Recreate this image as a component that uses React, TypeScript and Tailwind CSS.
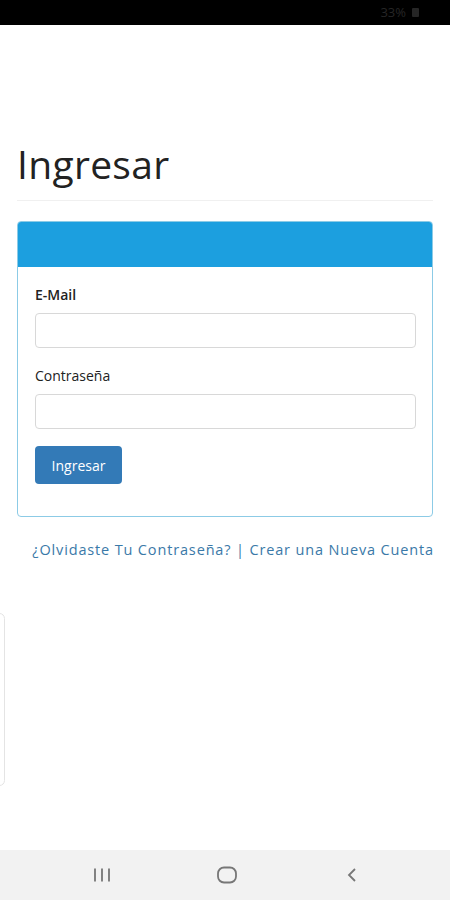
import React from "react";

const font = { fontFamily: '"Open Sans", "Noto Sans", Arial, sans-serif' };

function StatusBar() {
  return (
    <div className="h-[25px] bg-black flex items-center justify-end pr-[31px] gap-[6px]">
      <span className="text-[13px] text-[#262626] leading-none">33%</span>
      <span className="w-[7px] h-[9px] bg-[#262626] rounded-[1px]" />
    </div>
  );
}

function NavBar() {
  return (
    <div className="h-[50px] bg-[#f2f2f2] flex items-center pl-[82px] gap-[85px]">
      <div className="w-[40px] flex justify-center">
        <svg width="20" height="16" viewBox="0 0 20 16" className="text-[#777]">
          <path d="M3 1.5v13M10 1.5v13M17 1.5v13" stroke="currentColor" strokeWidth="1.8" />
        </svg>
      </div>
      <div className="w-[40px] flex justify-center">
        <svg width="22" height="18" viewBox="0 0 22 18" className="text-[#777]">
          <rect x="2" y="1.5" width="18" height="15" rx="6" fill="none" stroke="currentColor" strokeWidth="1.8" />
        </svg>
      </div>
      <div className="w-[40px] flex justify-center">
        <svg width="12" height="16" viewBox="0 0 12 16" className="text-[#777]">
          <path d="M9 2 3 8l6 6" fill="none" stroke="currentColor" strokeWidth="1.8" />
        </svg>
      </div>
    </div>
  );
}

export default function App() {
  return (
    <div className="w-[450px] h-[900px] bg-white flex flex-col" style={font}>
      <StatusBar />
      <div className="flex-1 flex flex-col relative">
        <div className="px-[17px] pt-[117px]">
          <h1 className="text-[39px] leading-[44px] text-[#222] font-normal tracking-[0.3px] pb-[14px] border-b border-[#f0f0f0]">
            Ingresar
          </h1>

          {/* Panel */}
          <div className="mt-[20px] border border-[#8ccbe6] rounded-[4px] overflow-hidden">
            <div className="h-[45px] bg-[#1c9fdf]" />
            <div className="pl-[17px] pr-[16px] pt-[18px] pb-[32px]">
              <label className="block text-[14px] font-semibold text-[#222] leading-[20px]">E-Mail</label>
              <div className="mt-[8px] h-[35px] border border-[#d8d8d8] rounded-[4px]" />
              <label className="block mt-[18px] text-[14px] font-medium text-[#222] leading-[20px]">Contraseña</label>
              <div className="mt-[8px] h-[35px] border border-[#d8d8d8] rounded-[4px]" />
              <button className="mt-[17px] h-[38px] w-[87px] bg-[#337ab7] rounded-[4px] text-white text-[14px] flex items-center justify-center">
                Ingresar
              </button>
            </div>
          </div>

          <p className="mt-[23px] text-[14.5px] leading-[20px] text-[#3a79a8] text-right tracking-[0.85px] whitespace-nowrap mr-[-1px]">
            ¿Olvidaste Tu Contraseña? | Crear una Nueva Cuenta
          </p>
        </div>

        <div className="absolute left-[-6px] top-[588px] w-[11px] h-[173px] border border-[#e4e4e4] rounded-[6px]" />
      </div>
      <NavBar />
    </div>
  );
}
